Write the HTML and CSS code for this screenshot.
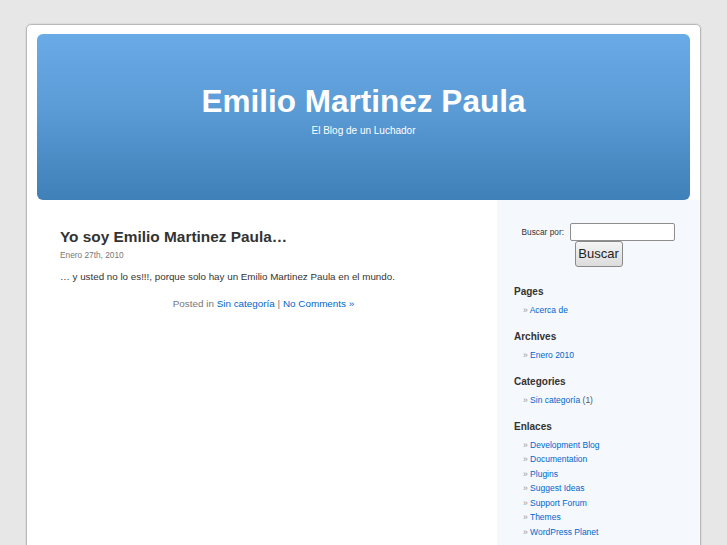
FILE: index.html
```html
<!DOCTYPE html>
<html lang="es">
<head>
<meta charset="utf-8">
<title>Emilio Martinez Paula</title>
<link rel="stylesheet" href="styles.css">
</head>
<body>
<div class="page">
  <header class="header">
    <h1 class="site-title">Emilio Martinez Paula</h1>
    <div class="site-desc">El Blog de un Luchador</div>
  </header>
  <div class="content">
    <main class="narrowcolumn">
      <div class="post">
        <h2 class="post-title">Yo soy Emilio Martinez Paula…</h2>
        <div class="post-date">Enero 27th, 2010</div>
        <p class="entry">… y usted no lo es!!!, porque solo hay un Emilio Martinez Paula en el mundo.</p>
        <p class="postmetadata">Posted in <a href="#">Sin categoría</a> | <a href="#">No Comments »</a></p>
      </div>
    </main>
    <aside class="sidebar">
      <form class="search">
        <label class="search-label" for="s">Buscar por:</label>
        <input class="search-input" type="text" id="s">
        <button class="search-btn" type="button">Buscar</button>
      </form>
      <h2 class="side-title">Pages</h2>
      <ul class="side-list">
        <li><a href="#">Acerca de</a></li>
      </ul>
      <h2 class="side-title">Archives</h2>
      <ul class="side-list">
        <li><a href="#">Enero 2010</a></li>
      </ul>
      <h2 class="side-title">Categories</h2>
      <ul class="side-list">
        <li><a href="#">Sin categoría</a> (1)</li>
      </ul>
      <h2 class="side-title">Enlaces</h2>
      <ul class="side-list">
        <li><a href="#">Development Blog</a></li>
        <li><a href="#">Documentation</a></li>
        <li><a href="#">Plugins</a></li>
        <li><a href="#">Suggest Ideas</a></li>
        <li><a href="#">Support Forum</a></li>
        <li><a href="#">Themes</a></li>
        <li><a href="#">WordPress Planet</a></li>
      </ul>
    </aside>
  </div>
</div>
</body>
</html>
```

FILE: styles.css
```css
html, body {
  margin: 0;
  padding: 0;
}
body {
  background: #e7e7e7;
  font-family: "Liberation Sans", Arial, sans-serif;
  color: #333;
  height: 545px;
  overflow: hidden;
}
a {
  color: #0066cc;
  text-decoration: none;
}
.page {
  width: 673px;
  margin: 24px auto 0;
  background: #fff;
  border: 1px solid #b9b9b9;
  border-radius: 5px;
  box-shadow: 0 0 0 1px #dcdcdc;
  min-height: 560px;
}
.header {
  margin: 9px 10px 0 10px;
  height: 166px;
  border-radius: 6px;
  background: linear-gradient(#69abe7, #5b9bd6 45%, #4080b8);
  color: #fff;
  text-align: center;
  overflow: hidden;
}
.site-title {
  margin: 48px 0 0;
  font-size: 31.5px;
  line-height: 38px;
  font-weight: bold;
}
.site-desc {
  margin-top: 5px;
  font-size: 10px;
  line-height: 12px;
}
.content {
  display: flex;
  min-height: 400px;
}
.narrowcolumn {
  width: 407px;
  padding: 27px 30px 0 33px;
}
.post-title {
  margin: 0;
  font-size: 15.4px;
  line-height: 20px;
  font-weight: bold;
  color: #333;
}
.post-date {
  margin-top: 3px;
  font-size: 8.3px;
  line-height: 10px;
  color: #777;
}
.entry {
  margin: 10px 0 0;
  font-size: 9.8px;
  line-height: 14px;
  color: #333;
}
.postmetadata {
  margin: 13px 0 0;
  font-size: 9.9px;
  line-height: 14px;
  color: #777;
  text-align: center;
}
.sidebar {
  flex: 1;
  background: #f5f8fc;
  padding: 22px 0 0 17px;
}
.search {
  text-align: center;
  margin: 0 0 0 -17px;
}
.search-label {
  font-size: 8.3px;
  color: #333;
  vertical-align: middle;
}
.search-input {
  width: 105px;
  height: 18px;
  box-sizing: border-box;
  border: 1px solid #8e8e8e;
  border-radius: 2px;
  padding: 0;
  margin: 0 0 0 2px;
  vertical-align: middle;
  background: #fff;
}
.search-btn {
  display: block;
  margin: 0 auto;
  width: 48px;
  height: 26px;
  padding: 0;
  border: 1px solid #8a8a8a;
  border-radius: 3px;
  background: linear-gradient(#f4f4f4, #dcdcdc);
  font-family: "Liberation Sans", Arial, sans-serif;
  font-size: 13px;
  color: #222;
}
.side-title {
  margin: 18px 0 4px;
  font-size: 10px;
  line-height: 14px;
  font-weight: bold;
  color: #333;
}
.side-list {
  list-style: none;
  margin: 0 0 12.5px;
  padding: 0 0 0 9px;
  font-size: 8.5px;
  line-height: 14.5px;
  color: #555;
}
.side-list li::before {
  content: "\00BB\0020";
  color: #999;
}
.side-list + .side-title {
  margin-top: 0;
}
```
